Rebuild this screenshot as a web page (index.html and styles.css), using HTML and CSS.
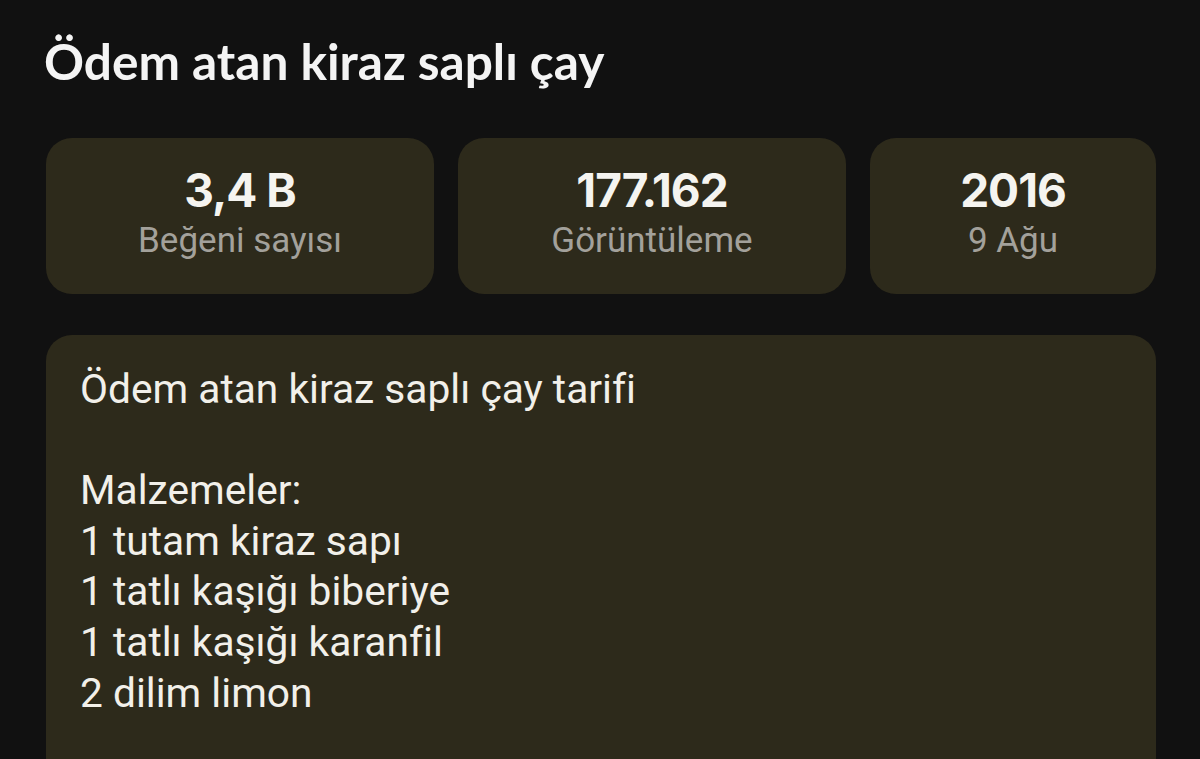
FILE: index.html
```html
<!DOCTYPE html>
<html lang="tr">

<head>
    <meta charset="UTF-8">
    <meta name="viewport" content="width=device-width, initial-scale=1.0">
    <title>Ödem atan kiraz saplı çay</title>
    <link rel="stylesheet" href="styles.css">
</head>

<body>

    <div class="page">
        <!-- Başlık -->
        <h1 class="video-title">Ödem atan kiraz saplı çay</h1>

        <!-- İstatistik kartları -->
        <div class="stats">
            <div class="stat-card">
                <div class="stat-value">3,4 B</div>
                <div class="stat-label">Beğeni sayısı</div>
            </div>
            <div class="stat-card">
                <div class="stat-value">177.162</div>
                <div class="stat-label">Görüntüleme</div>
            </div>
            <div class="stat-card">
                <div class="stat-value">2016</div>
                <div class="stat-label">9 Ağu</div>
            </div>
        </div>

        <!-- Açıklama -->
        <div class="description">
            <p>Ödem atan kiraz saplı çay tarifi</p>
            <p>&nbsp;</p>
            <p>Malzemeler:</p>
            <p>1 tutam kiraz sapı</p>
            <p>1 tatlı kaşığı biberiye</p>
            <p>1 tatlı kaşığı karanfil</p>
            <p>2 dilim limon</p>
            <p>&nbsp;</p>
            <p>&nbsp;</p>
        </div>
    </div>

</body>

</html>
```

FILE: styles.css
```css
/* Genel sayfa */
body {
    margin: 0;
    padding: 0;
    background-color: #111111;
    color: #f2f0ea;
    font-family: Roboto, "Noto Sans", sans-serif;
    height: 100vh;
    overflow: hidden;
}

.page {
    padding: 0 44px 0 46px;
}

/* Başlık */
.video-title {
    margin: 0 0 0 -2px;
    padding: 33px 0 0 0;
    font-family: Lato, "Open Sans", sans-serif;
    font-size: 49.6px;
    font-weight: 700;
    line-height: 56px;
    color: #f4f4f4;
}

/* İstatistik kartları */
.stats {
    display: grid;
    grid-template-columns: 388px 388px 1fr;
    gap: 24px;
    margin-top: 49px;
}

.stat-card {
    background-color: #2d2a1b;
    border-radius: 26px;
    height: 156px;
    display: flex;
    flex-direction: column;
    align-items: center;
    padding-top: 27px;
    box-sizing: border-box;
}

.stat-value {
    font-family: Inter, Roboto, sans-serif;
    font-size: 46px;
    font-weight: 700;
    line-height: 50px;
    letter-spacing: -1px;
    color: #f5f4f0;
}

.stat-label {
    font-size: 35px;
    line-height: 52px;
    color: #a3a19b;
}

/* Açıklama kutusu */
.description {
    background-color: #2d2a1b;
    border-radius: 26px;
    margin-top: 41px;
    padding: 29px 34px;
}

.description p {
    margin: 0;
    font-size: 40.7px;
    line-height: 50.6px;
    color: #f2f0ea;
}
```
